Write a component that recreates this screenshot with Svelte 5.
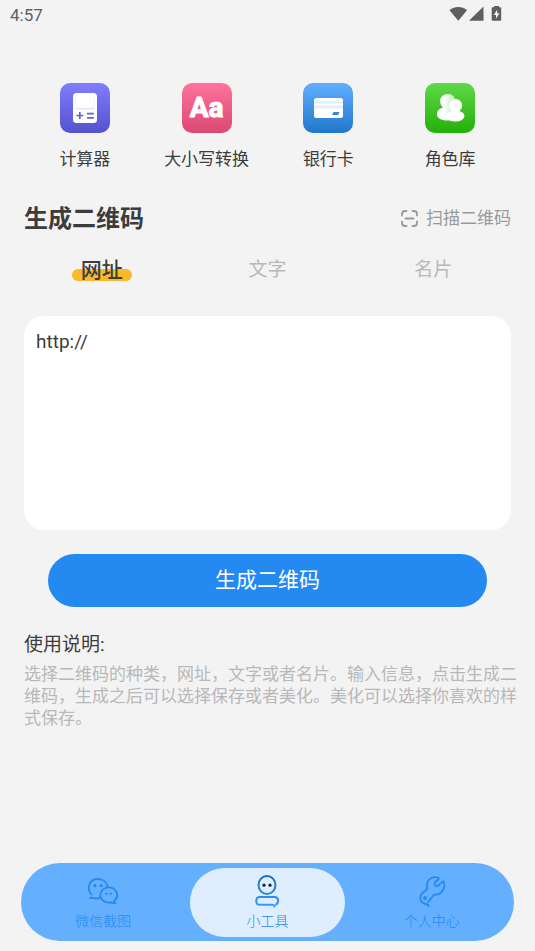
<script>
  const tools = [
    { id: 'calc', label: '计算器' },
    { id: 'case', label: '大小写转换' },
    { id: 'card', label: '银行卡' },
    { id: 'roles', label: '角色库' }
  ];
  const tabs = ['网址', '文字', '名片'];
  const pages = [
    { id: 'wechat', label: '微信截图' },
    { id: 'tools', label: '小工具' },
    { id: 'me', label: '个人中心' }
  ];

  let activeTab = $state('网址');
  let activePage = $state('tools');
  let content = $state('http://');
</script>

<div class="screen">
  <header class="status">
    <span>4:57</span>
    <svg width="56" height="18" viewBox="0 0 56 18" fill="#5f5f5f" aria-hidden="true">
      <path d="M0.5 5.2C5.5 .9 13 .9 18 5.2L9.3 15.7Z" />
      <path d="M34.5 1.5V15.7H20Z" />
      <path d="M45 2.2V1h5v1.2h1.2q1 0 1 1v11.5q0 1-1 1h-7.500q-1 0-1-1V3.200q0-1 1-1Z" />
      <path d="M48.200 4.700L44.700 9.900H47V13.700L50.400 8.300H48.200Z" fill="#f3f3f3" />
    </svg>
  </header>

  <main>
    <section class="tools">
      {#each tools as tool (tool.id)}
        <button class="tool" type="button">
          <span class="tile {tool.id}">
            {#if tool.id === 'calc'}
              <svg width="50" height="50" viewBox="0 0 50 50" aria-hidden="true">
                <rect x="13" y="10" width="24" height="30" rx="3.500" fill="#fff" />
                <rect x="15.500" y="12" width="19" height="14.500" rx="2.500" fill="#e4e5fa" />
                <rect x="16" y="11" width="18" height="14" rx="2.500" fill="#fff" />
                <path d="M16.300 32.500h7M19.800 29v7M27 30.700h6.800M27 34.800h6.800" stroke="#6260d8" stroke-width="1.700" />
              </svg>
            {:else if tool.id === 'case'}
              Aa
            {:else if tool.id === 'card'}
              <svg width="50" height="50" viewBox="0 0 50 50" aria-hidden="true">
                <defs>
                  <linearGradient id="stripe" x1="0" y1="0" x2="0" y2="1">
                    <stop offset="0" stop-color="#fff" />
                    <stop offset=".3" stop-color="#e0eefb" />
                    <stop offset=".5" stop-color="#fff" />
                    <stop offset=".75" stop-color="#dcecfb" />
                    <stop offset="1" stop-color="#fff" />
                  </linearGradient>
                </defs>
                <rect x="11" y="15" width="29" height="20" rx="2.500" fill="#fff" />
                <rect x="11" y="16.500" width="29" height="10" fill="url(#stripe)" />
                <path d="M30.500 29h6l-1.400 3h-6Z" fill="#3288da" />
              </svg>
            {:else}
              <svg width="50" height="50" viewBox="0 0 50 50" aria-hidden="true">
                <defs>
                  <linearGradient id="back" gradientUnits="userSpaceOnUse" x1="19" x2="31" y1="0" y2="0">
                    <stop offset="0" stop-color="#fff" />
                    <stop offset="1" stop-color="#b5e9aa" />
                  </linearGradient>
                </defs>
                <path d="M23 11c4.500 0 7.500 3.200 7.500 7.500 0 3-1 5-2.500 7 3 1.500 5 3.500 5 7 0 4-3 5-10 5-7.500 0-11-2.500-11-6.500 0-3.200 2.500-5.500 6-6.500-2-1.700-2.800-4-2.800-6.500 0-4 3.300-7 7.800-7Z" fill="url(#back)" />
                <circle cx="30.700" cy="22.500" r="6.500" fill="#fff" />
                <ellipse cx="30.500" cy="33" rx="9" ry="5.500" fill="#fff" />
                <path d="M26.500 25h8.500v5h-8.500Z" fill="#fff" />
              </svg>
            {/if}
          </span>
          <span>{tool.label}</span>
        </button>
      {/each}
    </section>

    <section class="heading">
      <h1>生成二维码</h1>
      <button class="scan" type="button">
        <svg width="17" height="17" viewBox="0 0 17 17" fill="none" stroke="#999" stroke-width="1.800" stroke-linecap="round" stroke-linejoin="round" aria-hidden="true">
          <path d="M1 5.500V4Q1 1 4 1H5.500M11.500 1H13Q16 1 16 4V5.500M16 11.500V13Q16 16 13 16H11.500M5.500 16H4Q1 16 1 13V11.500M4.500 8.500h8" />
        </svg>
        扫描二维码
      </button>
    </section>

    <div class="tabs" role="tablist">
      {#each tabs as tab (tab)}
        <button type="button" role="tab" aria-selected={activeTab === tab} class:active={activeTab === tab} onclick={() => (activeTab = tab)}>
          <span>{tab}</span>
        </button>
      {/each}
    </div>

    <textarea aria-label="二维码内容" spellcheck="false" bind:value={content}></textarea>

    <button class="generate" type="button">生成二维码</button>

    <section class="help">
      <h2>使用说明:</h2>
      <p>选择二维码的种类，网址，文字或者名片。输入信息，点击生成二维码，生成之后可以选择保存或者美化。美化可以选择你喜欢的样式保存。</p>
    </section>
  </main>

  <nav>
    {#each pages as page (page.id)}
      <button type="button" class:active={activePage === page.id} onclick={() => (activePage = page.id)}>
        <svg width="36" height="36" viewBox="0 0 36 36" fill="none" stroke="currentColor" stroke-width="1.800" stroke-linecap="round" stroke-linejoin="round" aria-hidden="true">
          {#if page.id === 'wechat'}
            <path d="M6.500 21.500C1.500 16 3.500 6 13 6c5.500 0 9 3.500 9.600 8M5 25.200c2.500-1.500 4.500.8 6.800.3l2.200-.5" />
            <path d="M30.500 30c-2 .4-3-.7-5-.5C20 30.300 15.300 26.500 15.300 22.300c0-4.600 3.700-8 8.500-8s8.400 3.400 8.400 7.800c0 2.700-1.400 4.600-3.200 6" />
            <g fill="currentColor" stroke="none">
              <circle cx="10" cy="12.700" r="1.600" /><circle cx="16.200" cy="12.700" r="1.600" />
              <circle cx="21.400" cy="20.600" r="1.200" /><circle cx="25.700" cy="20.600" r="1.200" />
            </g>
          {:else if page.id === 'tools'}
            <defs>
              <linearGradient id="bot" x1="0" y1="3" x2="0" y2="34" gradientUnits="userSpaceOnUse">
                <stop offset="0" stop-color="#156bc4" />
                <stop offset="1" stop-color="#3a9bff" />
              </linearGradient>
            </defs>
            <g stroke="url(#bot)" stroke-width="2">
              <ellipse cx="18" cy="12" rx="8.500" ry="9" />
              <path d="M27 31.500c3-1.500 3-7.500-1.500-7.500H11c-5 0-5 7.800 0 7.800h12.500q1.700 0 2 1.700" />
            </g>
            <g fill="#0b2447" stroke="none"><circle cx="15" cy="12.200" r="1.600" /><circle cx="21" cy="12.200" r="1.600" /></g>
          {:else}
            <path d="M14.700 33.200c-.2-1.500-1.200-1.900-3-2.200-6.500-1-7-8.500-2-12 2.700-2 4-2.700 3.500-5.500C12.200 7.500 17.500 3 23.500 4.500L25 5.500l-4 4c-1.500 2 .8 4.800 3.200 3.200l5-4.500c3.300 5.300-1.200 14.600-9.200 13.300L14.300 29" />
            <circle cx="11" cy="25" r="1.900" fill="currentColor" stroke="none" />
          {/if}
        </svg>
        <span>{page.label}</span>
      </button>
    {/each}
  </nav>
</div>

<style>
  :global(body) {
    margin: 0;
    background: #f3f3f3;
  }
  .screen {
    box-sizing: border-box;
    display: flex;
    flex-direction: column;
    min-height: 100vh;
    padding-bottom: 10px;
    background: #f3f3f3;
    color: #3c3c3c;
    font-family: Roboto, 'Noto Sans CJK SC', sans-serif;
  }
  button {
    margin: 0;
    padding: 0;
    border: 0;
    background: none;
    color: inherit;
    font: inherit;
    cursor: pointer;
  }
  h1, h2, p {
    margin: 0;
  }
  .status {
    display: flex;
    justify-content: space-between;
    align-items: center;
    height: 30px;
    padding: 0 30px 0 10px;
    color: #5f5f5f;
    font-size: 17px;
  }
  .status svg {
    margin-bottom: 2px;
  }
  main {
    display: flex;
    flex-direction: column;
    padding: 53px 24px 24px;
  }
  .tools {
    display: grid;
    grid-template-columns: repeat(4, 1fr);
  }
  .tool {
    display: flex;
    flex-direction: column;
    align-items: center;
    gap: 14px;
    font-size: 17px;
    line-height: 24px;
  }
  .tile {
    display: flex;
    justify-content: center;
    align-items: center;
    width: 50px;
    height: 50px;
    border-radius: 10px;
  }
  .calc { background: linear-gradient(#807dff, #5552ce); }
  .case {
    background: linear-gradient(#ff739d, #d94974);
    color: #fff;
    font-size: 28px;
    font-weight: 700;
    -webkit-text-stroke: 1px #fff;
  }
  .card { background: linear-gradient(#61aeff, #2177ca); }
  .roles { background: linear-gradient(#5fd948, #23b009); }
  .heading {
    display: flex;
    justify-content: space-between;
    align-items: center;
    margin-top: 30px;
  }
  h1 {
    font-size: 24px;
    font-weight: 700;
    line-height: 36px;
  }
  .scan {
    display: flex;
    align-items: center;
    gap: 8px;
    padding-bottom: 2px;
    color: #999;
    font-size: 17px;
    line-height: 24px;
  }
  .tabs {
    display: grid;
    grid-template-columns: repeat(3, 1fr);
    margin: 17px -5px 0;
  }
  .tabs button {
    height: 32px;
    color: #b8b8b8;
    font-size: 19px;
    line-height: 32px;
  }
  .tabs .active {
    color: #3c3c3c;
    font-size: 21px;
    font-weight: 500;
  }
  .tabs .active span {
    position: relative;
    z-index: 0;
    display: inline-block;
    padding: 0 9px;
  }
  .tabs .active span::before {
    content: '';
    position: absolute;
    z-index: -1;
    inset: auto 0 5px;
    height: 12px;
    border-radius: 6px;
    background: #f9ba2a;
  }
  textarea {
    box-sizing: border-box;
    width: 100%;
    height: 214px;
    margin-top: 30px;
    padding: 14px 12px;
    border: 0;
    border-radius: 20px;
    outline: 0;
    resize: none;
    background: #fff;
    color: #3c3c3c;
    font: 19px/24px Roboto, 'Noto Sans CJK SC', sans-serif;
  }
  .generate {
    margin: 24px 24px 0;
    border-radius: 27px;
    background: #2489f0;
    color: #fff;
    font-size: 21px;
    line-height: 53px;
  }
  .help {
    margin-top: 24px;
  }
  h2 {
    font-size: 19px;
    font-weight: 400;
    line-height: 28px;
  }
  p {
    margin: 4px -8px 0 0;
    color: #b8b8b8;
    font-size: 17px;
    line-height: 22px;
  }
  nav {
    display: grid;
    grid-template-columns: repeat(3, 1fr);
    box-sizing: border-box;
    height: 78px;
    margin: auto 21px 0;
    padding: 5px 0 4px;
    border-radius: 39px;
    background: #64b0ff;
  }
  nav button {
    display: flex;
    flex-direction: column;
    align-items: center;
    margin: 0 5px;
    padding-top: 5px;
    border-radius: 35px;
    color: #2489f0;
    font-size: 14px;
    font-weight: 300;
    line-height: 24px;
  }
  nav .active {
    background: #dfeeff;
  }
</style>
